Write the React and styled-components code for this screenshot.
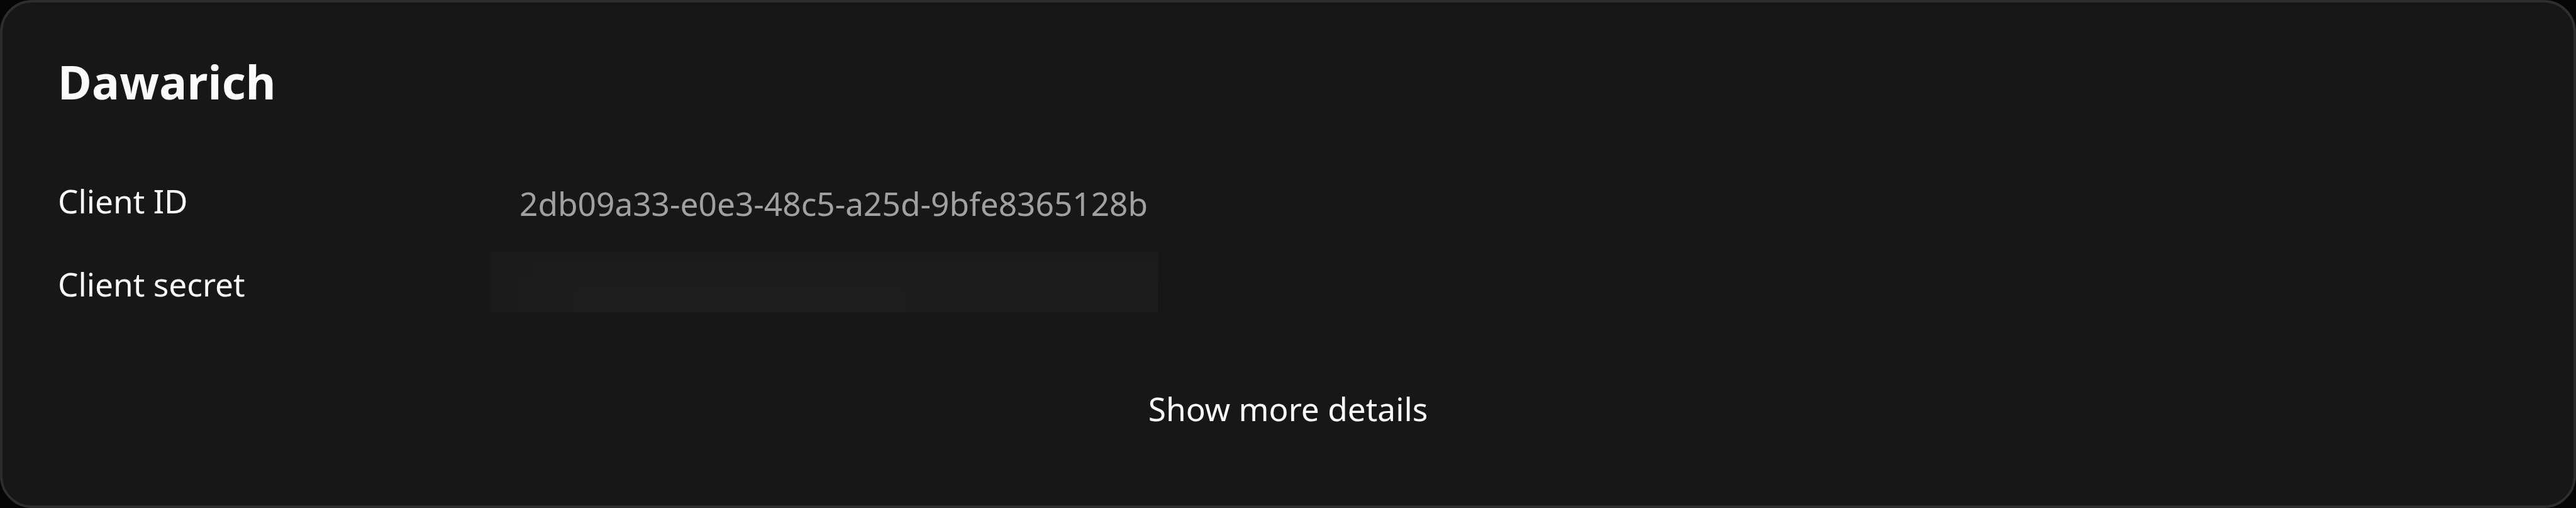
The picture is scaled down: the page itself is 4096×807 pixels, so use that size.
import React, { useState } from "react";
import styled, { createGlobalStyle } from "styled-components";

const client = {
  name: "Dawarich",
  id: "2db09a33-e0e3-48c5-a25d-9bfe8365128b"
};

function App() {
  const [showDetails, setShowDetails] = useState(false);

  return (
    <>
      <GlobalStyle />
      <Card>
        <Title>{client.name}</Title>
        <Fields>
          <Field>
            <Label>Client ID</Label>
            <Value>{client.id}</Value>
          </Field>
          <Field>
            <Label>Client secret</Label>
            <HiddenValue />
          </Field>
        </Fields>
        <DetailsButton
          aria-expanded={showDetails}
          onClick={() => setShowDetails(!showDetails)}
        >
          Show more details
        </DetailsButton>
      </Card>
    </>
  );
}

export default App;

const GlobalStyle = createGlobalStyle`
  *,
  *::before,
  *::after {
    box-sizing: border-box;
  }

  body {
    margin: 0;
    background: #060606;
    color: #fafafa;
    font-family: "Noto Sans", sans-serif;
    font-size: 51.4px;
    line-height: 73px;
    overflow: hidden;
  }
`;

const Card = styled.section`
  display: flex;
  flex-direction: column;
  height: 807px;
  padding: 88px;
  border: 4px solid #2e2e2e;
  border-radius: 51px;
  background: #171717;
`;

const Title = styled.h2`
  margin: 0;
  font-size: 73.4px;
  font-weight: 700;
  letter-spacing: 0.25px;
  line-height: 76px;
`;

const Fields = styled.dl`
  display: flex;
  flex-direction: column;
  gap: 36px;
  margin: 100px 0 0;
`;

const Field = styled.div`
  display: grid;
  grid-template-columns: 688px 1061px;
  align-items: center;
  height: 96px;
`;

const Label = styled.dt`
  padding-top: 7px;
`;

const Value = styled.dd`
  margin: 0;
  padding: 15px 0 0 46px;
  color: #a1a1a1;
  white-space: nowrap;
`;

/* the masked block brightens in steps from its top left corner */
const HiddenValue = styled.dd`
  height: 96px;
  margin: 0;
  background:
    linear-gradient(#1a1a1a, #1a1a1a) 0 0 / 64px 15px no-repeat,
    linear-gradient(#1b1b1b, #1b1b1b) 0 0 / 100% 15px no-repeat,
    linear-gradient(#1a1a1a, #1a1a1a) 0 15px / 38px 22px no-repeat,
    linear-gradient(#1b1b1b, #1b1b1b) 0 15px / 67px 22px no-repeat,
    linear-gradient(#1c1c1c, #1c1c1c) 0 15px / 100% 22px no-repeat,
    linear-gradient(#1a1a1a, #1a1a1a) 0 37px / 11px 59px no-repeat,
    linear-gradient(#1b1b1b, #1b1b1b) 0 37px / 40px 59px no-repeat,
    linear-gradient(#1c1c1c, #1c1c1c) 0 37px / 105px 24px no-repeat,
    linear-gradient(#1c1c1c, #1c1c1c) 0 61px / 79px 35px no-repeat,
    linear-gradient(#1d1d1d, #1d1d1d) 0 61px / 136px 35px no-repeat,
    linear-gradient(#1d1d1d, #1d1d1d) 0 37px / 655px 24px no-repeat,
    linear-gradient(#1c1c1c, #1c1c1c) 0 37px / 100% 8px no-repeat,
    linear-gradient(#1e1e1e, #1e1e1e) 0 61px / 655px 35px no-repeat,
    #1d1d1d;
`;

const DetailsButton = styled.button`
  align-self: center;
  margin-top: 117px;
  padding: 0;
  border: none;
  background: transparent;
  color: inherit;
  font: inherit;
`;
